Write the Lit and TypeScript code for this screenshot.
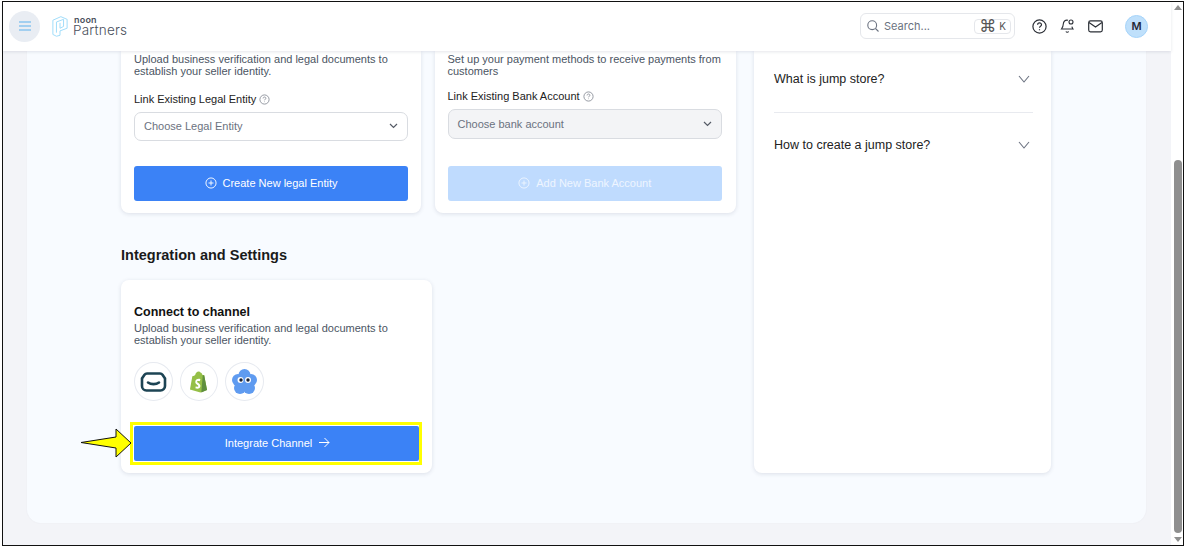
import { LitElement, html, css, svg } from "lit";
import { customElement } from "lit/decorators.js";

const plus = svg`<svg width="12" height="12" viewBox="0 0 13 13" fill="none" stroke="currentColor" stroke-width="1"><circle cx="6.5" cy="6.5" r="5.500"/><path d="M6.500 3.800v5.400M3.800 6.500h5.400"/></svg>`;
const help = svg`<svg width="11" height="11" viewBox="0 0 11 11" fill="none" stroke="#8a8f98" stroke-width=".9"><circle cx="5.5" cy="5.5" r="4.6"/><path d="M4.1 4.4c0-1.8 2.8-1.8 2.8-.1 0 1-1.4 1-1.4 2M5.5 7.6v.5"/></svg>`;
const chev = svg`<svg width="9" height="6" viewBox="0 0 9 6" fill="none" stroke="#555b66" stroke-width="1.2"><path d="M1 1l3.500 3.500L8 1"/></svg>`;
const bigChev = svg`<svg width="12" height="8" viewBox="0 0 12 8" fill="none" stroke="#6b7280" stroke-width="1.1"><path d="M1 1l5 6 5-6"/></svg>`;

@customElement("app-root")
export class AppRoot extends LitElement {
  static styles = css`
    :host { display: block; width: 1185px; height: 547px; box-sizing: border-box; padding: 1px 1px 1px 2px; background: #fff; font-family: "Liberation Sans", Arial, sans-serif; overflow: hidden; color: #111; }
    .frame { display: grid; grid-template-columns: 1168px 12px; height: 100%; box-sizing: border-box; border: 1px solid #111; background: #f3f4f8; }
    .page { display: flex; flex-direction: column; min-width: 0; height: 543px; }
    header { height: 49px; box-sizing: border-box; flex: none; background: #fff; display: flex; align-items: center; padding: 0 23px 1px 6px; box-shadow: 0 1px 3px rgba(40,50,80,.12); position: relative; z-index: 1; }
    .burger { width: 31px; height: 31px; border-radius: 50%; background: #e9edf3; display: grid; place-items: center; }
    .logo { display: flex; align-items: center; gap: 5px; margin-left: 12px; }
    .wordmark { display: flex; flex-direction: column; font-family: "Inter", sans-serif; color: #4a505c; }
    .noon { font-size: 9px; line-height: 9px; font-weight: 600; padding-left: 1px; letter-spacing: .2px; }
    .partners { font-size: 13.5px; line-height: 13px; letter-spacing: .2px; font-weight: 300; }
    .right { margin-left: auto; display: flex; align-items: center; }
    .search { width: 155px; height: 26px; box-sizing: border-box; border: 1px solid #e5e7eb; border-radius: 6px; display: flex; align-items: center; padding: 0 3px 0 5px; gap: 4px; color: #6b7280; font: 11px "Inter", sans-serif; margin-right: 17px; }
    .kbd { margin-left: auto; width: 37px; height: 15px; box-sizing: border-box; border: 1px solid #e5e7eb; border-radius: 4px; display: flex; align-items: center; justify-content: center; gap: 3px; font-size: 10px; color: #555; }
    .cmd { font-size: 17px; line-height: 13px; font-family: "DejaVu Sans", sans-serif; }
    .icons { display: flex; align-items: center; gap: 13px; }
    .avatar { width: 23px; height: 23px; margin-left: 22px; border-radius: 50%; background: #bfe0fb; border: 1px solid #a6d4fa; box-sizing: border-box; display: grid; place-items: center; font: 600 11px "Inter", sans-serif; color: #1f2937; }
    main { flex: 1; min-height: 0; padding: 0 25px 22px 24px; overflow: hidden; }
    .panel { height: 100%; background: #f8fbff; border-radius: 0 0 14px 14px; box-shadow: 0 0 2px rgba(60,70,100,.06); padding: 0 94px; box-sizing: border-box; display: grid; grid-template-columns: 615px 297px; column-gap: 18px; align-items: start; }
    .grid { display: grid; grid-template-columns: 300px 301px; column-gap: 14px; }
    .card { background: #fff; border-radius: 8px; box-shadow: 0 1px 4px rgba(50,60,90,.14); box-sizing: border-box; padding: 0 13px; }
    .top { height: 162px; border-radius: 0 0 8px 8px; display: flex; flex-direction: column; }
    .top.g2 { padding: 0 14px 0 12.5px; }
    p { margin: 0; font-size: 11px; line-height: 12px; color: #4b5563; }
    .top p { margin-top: 2px; }
    .lbl { font-size: 11px; line-height: 14px; color: #222; display: flex; align-items: center; gap: 3px; margin-top: 15px; }
    .g2 .lbl { margin-top: 12px; }
    .sel { height: 29px; box-sizing: border-box; margin-top: 6px; border: 1px solid #d9dce1; border-radius: 7px; display: flex; align-items: center; justify-content: space-between; padding: 0 9px 1px; font-size: 11px; color: #6b7280; }
    .g2 .sel { background: #f3f4f6; height: 30px; }
    .btn { height: 35px; box-sizing: border-box; background: #3b82f6; color: #fff; border-radius: 3px; display: flex; align-items: center; justify-content: center; gap: 6px; font-size: 11px; padding-bottom: 1px; }
    .top .btn { margin-top: auto; margin-bottom: 12px; }
    .btn.off { background: #bfdbfe; color: #eef5ff; }
    h2 { margin: 0; font-size: 14.5px; line-height: 18px; font-weight: 700; padding: 33px 0 16px; color: #1a1a1a; }
    .connect { width: 311px; height: 193px; padding-top: 25px; }
    h3 { margin: 0 0 3px; font-size: 12.5px; line-height: 14px; font-weight: 700; color: #111; }
    .logos { display: flex; gap: 7px; margin-top: 16px; }
    .logos span { width: 38.5px; height: 39px; box-sizing: border-box; border: 1px solid #e7eaf0; border-radius: 50%; display: grid; place-items: center; }
    .action { position: relative; margin: 21px -3px 0 -4px; height: 43px; box-sizing: border-box; border: 3px solid #ffff00; padding: 1px 0 1px 1px; background: #fff; }
    .action .btn { height: 35px; margin: 0; border-radius: 2px; padding: 0 0 2px 2px; }
    .pointer { position: absolute; left: -56px; top: 0; }
    .faq { height: 422px; border-radius: 0 0 8px 8px; padding: 0 18px 0 20px; }
    .q { display: flex; justify-content: space-between; align-items: center; font-size: 12.5px; color: #222; height: 16px; padding-right: 3px; }
    .q.a { margin-top: 20px; padding-bottom: 25px; border-bottom: 1px solid #e8eaef; }
    .q.b { margin-top: 24px; }
    .bar { background: #fff; display: flex; flex-direction: column; align-items: center; padding: 3px 0 0 2px; height: 543px; box-sizing: border-box; }
    .thumb { width: 8px; background: #8f8f8f; height: 373px; border-radius: 4px; margin: 150px 0 4px; flex: none; }
    .tri { width: 0; height: 0; flex: none; border-left: 4px solid transparent; border-right: 4px solid transparent; }
    .up { border-bottom: 5px solid #8f8f8f; }
    .down { border-top: 5px solid #8f8f8f; }
  `;

  render() {
    return html`<div class="frame">
      <div class="page">
        <header>
          <div class="burger"><svg width="12" height="10" viewBox="0 0 12 10" stroke="#5db2ee" stroke-width="1.2"><path d="M0 1h12M0 5h12M0 9h12"/></svg></div>
          <div class="logo">
            <svg width="16" height="24" viewBox="0 0 18 23" fill="none" stroke="#9fdcfa" stroke-width="1.1"><path d="M1 5l9-4 7 3v10l-8 3v5l-4 1-4-2z"/><path d="M5 7l8-3v8l-4 2v-6"/><path d="M5 7v12"/></svg>
            <div class="wordmark"><span class="noon">noon</span><span class="partners">Partners</span></div>
          </div>
          <div class="right">
            <div class="search">
              <svg width="14" height="14" viewBox="0 0 14 14" fill="none" stroke="#6b7280" stroke-width="1.1"><circle cx="6.2" cy="6.2" r="4.4"/><path d="M9.5 9.5l3 3"/></svg>
              <span>Search...</span>
              <span class="kbd"><span class="cmd">⌘</span>K</span>
            </div>
            <div class="icons">
              <svg width="15" height="15" viewBox="0 0 15 15" fill="none" stroke="#2b2f36" stroke-width="1.2"><circle cx="7.5" cy="7.5" r="6.6"/><path d="M5.6 5.8c0-2.5 3.9-2.5 3.9-.1 0 1.5-2 1.4-2 3M7.5 10.3v.9"/></svg>
              <svg width="15" height="16" viewBox="0 0 15 16" fill="none" stroke="#2b2f36" stroke-width="1.1"><path d="M8 2.2C5 1.6 3.4 3.6 3.3 6c-.1 2.6-.9 3.8-1.8 5h11.500c-.5-.7-.9-1.400-1.100-2.300"/><path d="M6 13.300c.3 1.300 2.200 1.300 2.500 0"/><circle cx="11" cy="4" r="2"/></svg>
              <svg width="15" height="13" viewBox="0 0 15 13" fill="none" stroke="#2b2f36" stroke-width="1.2"><rect x=".7" y=".9" width="13.6" height="11" rx="1.8"/><path d="M1 2.500l6.500 4.500L14 2.500"/></svg>
            </div>
            <div class="avatar">M</div>
          </div>
        </header>
        <main>
          <div class="panel">
            <div>
              <div class="grid">
                <div class="card top">
                  <p>Upload business verification and legal documents to<br />establish your seller identity.</p>
                  <div class="lbl">Link Existing Legal Entity ${help}</div>
                  <div class="sel">Choose Legal Entity ${chev}</div>
                  <div class="btn">${plus} Create New legal Entity</div>
                </div>
                <div class="card top g2">
                  <p>Set up your payment methods to receive payments from<br />customers</p>
                  <div class="lbl">Link Existing Bank Account ${help}</div>
                  <div class="sel">Choose bank account ${chev}</div>
                  <div class="btn off">${plus} Add New Bank Account</div>
                </div>
              </div>
              <h2>Integration and Settings</h2>
              <div class="card connect">
                <h3>Connect to channel</h3>
                <p>Upload business verification and legal documents to<br />establish your seller identity.</p>
                <div class="logos">
                  <span><svg width="27" height="20" viewBox="0 0 27 20" fill="none" stroke="#1d4454" stroke-width="2.600"><path d="M7 1.500h13a3 3 0 0 1 2.500 1.300L25 6.500V14a4.500 4.500 0 0 1-4.500 4.500h-14A4.500 4.500 0 0 1 2 14V6.500l2.500-3.700A3 3 0 0 1 7 1.500z"/><path d="M8 10.500c3 2.200 8 2.200 11 0" stroke-linecap="round"/></svg></span>
                  <span><svg width="19" height="22" viewBox="0 0 20 23"><path fill="#95bf47" d="M1 19.500L3.500 5.500C5 5 6 4.500 6.500 4c.5-2 2-3.500 3.500-3.500 1 0 1.500.5 2 1 1 0 1.800 1.200 2.200 2.500l1.800.2L19 20l-7 2.500z"/><path fill="#5e8e3e" d="M14.500 4.500l1.500.2L19 20l-6 2.500z"/><path fill="#fff" d="M12 8.500l-.6 2.200c-1.600-.7-3-.3-3 .6 0 1.100 3.600 1.700 3.600 4.500 0 2.300-2.800 3.600-5.300 2.300l.5-2.200c1.500 1 2.700.7 2.700-.1 0-1.300-3.300-1.700-3.300-4.300 0-2.500 2.900-4 5.400-3z"/></svg></span>
                  <span><svg width="25" height="25" viewBox="0 0 25 25"><g fill="#5f9bf0"><circle cx="12.500" cy="6" r="6"/><circle cx="6" cy="11" r="6"/><circle cx="19" cy="11" r="6"/><circle cx="8" cy="19" r="6"/><circle cx="17" cy="19" r="6"/><circle cx="12.500" cy="13" r="7"/></g><circle cx="8.500" cy="11" r="3" fill="#fff"/><circle cx="16" cy="11" r="3" fill="#fff"/><circle cx="9" cy="11" r="1.700" fill="#182033"/><circle cx="16" cy="11" r="1.700" fill="#182033"/></svg></span>
                </div>
                <div class="action">
                  <svg class="pointer" width="56" height="34" viewBox="0 0 56 34"><path d="M4 17.500L39 12V4l15 14-15 14v-9z" fill="#ffff00" stroke="#111" stroke-width="1"/></svg>
                  <div class="btn">Integrate Channel <svg width="12" height="11" viewBox="0 0 12 11" fill="none" stroke="#fff" stroke-width="1"><path d="M1 5.500h10M6.500 1l4.500 4.500L6.500 10"/></svg></div>
                </div>
              </div>
            </div>
            <div class="card faq">
              <div class="q a"><span>What is jump store?</span>${bigChev}</div>
              <div class="q b"><span>How to create a jump store?</span>${bigChev}</div>
            </div>
          </div>
        </main>
      </div>
      <div class="bar">
        <div class="tri up"></div>
        <div class="thumb"></div>
        <div class="tri down"></div>
      </div>
    </div>`;
  }
}
